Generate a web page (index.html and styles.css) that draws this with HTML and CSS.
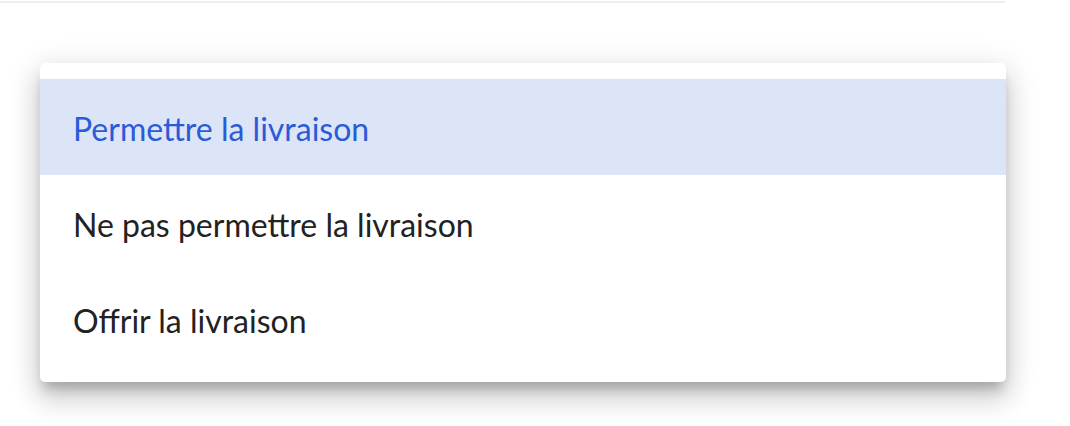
FILE: index.html
```html
<!DOCTYPE html>
<html lang="fr">
<head>
  <meta charset="UTF-8">
  <meta name="viewport" content="width=device-width, initial-scale=1.0">
  <title>Livraison</title>
  <link rel="stylesheet" href="styles.css">
</head>
<body>
  <div class="page">
    <div class="top-rule"></div>
    <ul class="menu">
      <li class="menu-item selected">Permettre la livraison</li>
      <li class="menu-item">Ne pas permettre la livraison</li>
      <li class="menu-item">Offrir la livraison</li>
    </ul>
  </div>
</body>
</html>
```

FILE: styles.css
```css
html,body{
  margin : 0;
  padding : 0;
  background : #fff;
  font-family : Lato, "Noto Sans", sans-serif;
}
.page{
  width : 1070px;
  height : 426px;
  overflow : hidden;
}
.top-rule{
  width : 1005px;
  height : 2px;
  margin-top : 1px;
  background : #eeeeee;
}
.menu{
  list-style : none;
  margin : 60px 0 0 40px;
  padding : 16px 0 15px;
  width : 966px;
  background : #fff;
  border-radius : 5px;
  box-shadow : 0 10px 12px -4px rgba(0,0,0,.22),
               0 18px 26px 2px rgba(0,0,0,.12),
               0 6px 30px 5px rgba(0,0,0,.1);
}
.menu-item{
  height : 96px;
  display : flex;
  align-items : center;
  padding : 2px 33px 0;
  box-sizing : border-box;
  font-size : 32px;
  color : #222;
}
.menu-item.selected{
  background : #dce4f8;
  color : #2a5bd7;
}
```
